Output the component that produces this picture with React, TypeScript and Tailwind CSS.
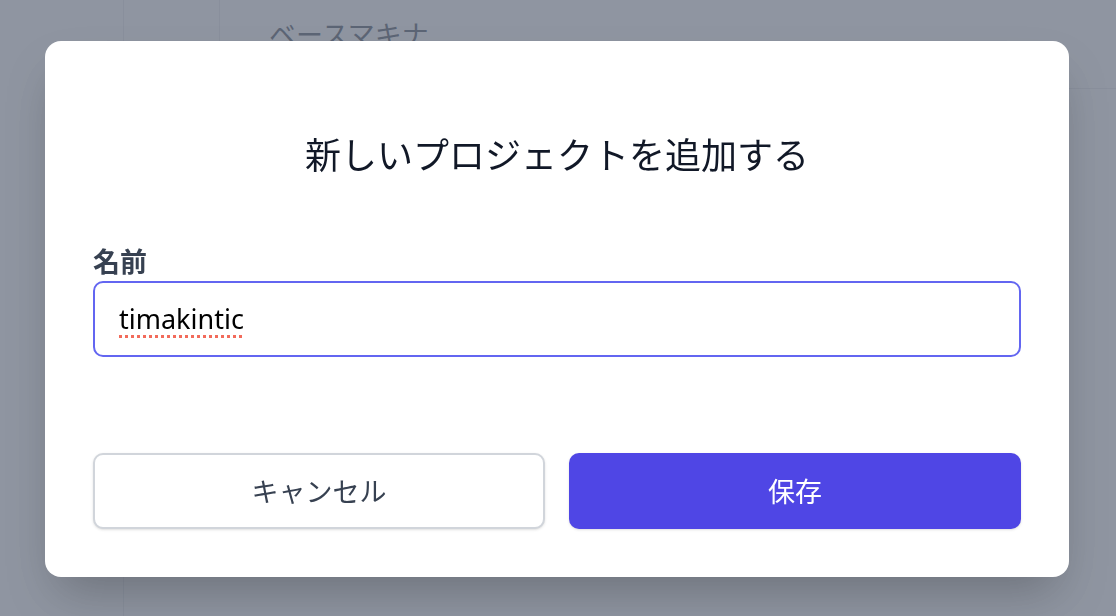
import React from 'react';

const jp = { fontFamily: '"Noto Sans CJK JP", "Noto Sans", sans-serif' };

const Background: React.FC = () => (
  <div className="flex h-[616px] w-full bg-white" style={jp}>
    <div className="w-[124px] shrink-0 border-r border-gray-200 bg-white" />
    <div className="flex flex-1 flex-col">
      <div className="flex h-[89px] border-b border-gray-200">
        <div className="w-[96px] shrink-0 border-r border-gray-200" />
        <div className="pl-[49px] pt-[14px] text-[27px] leading-[40px] text-[#374151]">ベースマキナ</div>
      </div>
      <div className="flex-1" />
    </div>
  </div>
);

const NewProjectModal: React.FC = () => (
  <div className="fixed inset-0 flex items-start justify-start bg-gray-500/75 pt-[41px] pl-[45px]" style={jp}>
    <div className="flex h-[536px] w-[1024px] flex-col rounded-2xl bg-white px-12 pt-[85px] pb-12 shadow-2xl">
      <h2 className="text-center text-[36px] leading-[54px] font-normal text-[#111827]">
        新しいプロジェクトを追加する
      </h2>

      {/* Name field */}
      <label className="mt-[63px] text-[27px] leading-[36px] font-bold text-[#374151]">名前</label>
      <div className="mt-[2px] flex h-[76px] items-center rounded-[10px] border-2 border-[#6366f1] pl-6">
        <span
          className="text-[27px] text-black underline decoration-[#f26b5b] decoration-dotted decoration-[3px] underline-offset-[6px]"
          style={{ fontFamily: '"Noto Sans", sans-serif' }}
        >
          timakintic
        </span>
      </div>

      {/* Actions */}
      <div className="mt-[96px] grid grid-cols-2 gap-6">
        <button className="flex h-[76px] items-center justify-center rounded-[10px] border-2 border-[#d1d5db] bg-white text-[27px] text-[#374151] shadow-sm">
          キャンセル
        </button>
        <button className="flex h-[76px] items-center justify-center rounded-[10px] bg-[#4f46e5] text-[27px] text-white shadow-sm">
          保存
        </button>
      </div>
    </div>
  </div>
);

export default function App() {
  return (
    <div className="relative h-[616px] w-full overflow-hidden">
      <Background />
      <NewProjectModal />
    </div>
  );
}
